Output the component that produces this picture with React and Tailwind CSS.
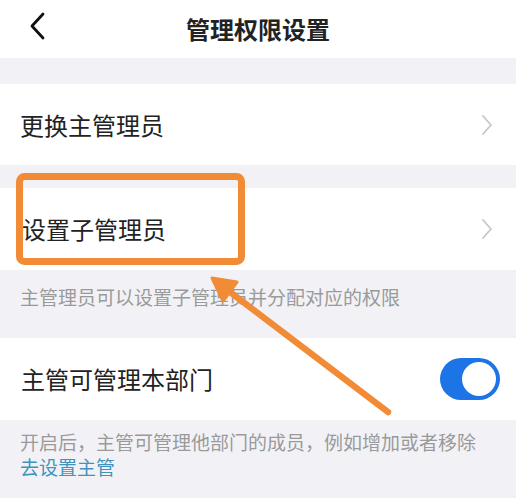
import React from "react";

const font = { fontFamily: '"Noto Sans CJK SC", "Noto Sans", sans-serif' };

function Chevron() {
  return (
    <svg width="14" height="24" viewBox="0 0 14 24" fill="none">
      <path d="M3 3l8 9-8 9" stroke="#c6c6c6" strokeWidth="1.8" strokeLinecap="round" strokeLinejoin="round" />
    </svg>
  );
}

export default function App() {
  return (
    <div className="relative w-[516px] h-[498px] overflow-hidden bg-[#f2f2f6]" style={font}>
      <div className="h-[58px] bg-white relative flex items-center justify-center">
        <svg className="absolute left-[28px] top-[12px]" width="20" height="28" viewBox="0 0 20 28" fill="none">
          <path d="M15 2L4 14l11 12" stroke="#111" strokeWidth="2.8" strokeLinecap="round" strokeLinejoin="round" />
        </svg>
        <span className="text-[24px] font-semibold text-[#222] leading-none">管理权限设置</span>
      </div>
      <div className="h-[26px]" />
      <div className="h-[81px] bg-white flex items-center justify-between pl-[20px] pr-[22px]">
        <span className="text-[24px] text-[#222] leading-none">更换主管理员</span>
        <Chevron />
      </div>
      <div className="h-[23px]" />
      <div className="h-[82px] bg-white flex items-center justify-between pl-[22px] pr-[22px]">
        <span className="text-[24px] text-[#222] leading-none">设置子管理员</span>
        <Chevron />
      </div>
      <div className="h-[68px] pl-[20px] pt-[15px]">
        <span className="text-[19px] text-[#9a9a9a] leading-[24px]">主管理员可以设置子管理员并分配对应的权限</span>
      </div>
      <div className="h-[82px] bg-white flex items-center justify-between pl-[21px] pr-[16px]">
        <span className="text-[24px] text-[#222] leading-none">主管可管理本部门</span>
        <div className="w-[60px] h-[42px] rounded-full bg-[#1c74e6] flex items-center justify-end pr-[4px]">
          <div className="w-[34px] h-[34px] rounded-full bg-white" />
        </div>
      </div>
      <div className="pl-[20px] pt-[9px] text-[19px] leading-[25px]">
        <div className="text-[#9a9a9a]">开启后，主管可管理他部门的成员，例如增加或者移除</div>
        <div className="text-[#3f93bd]">去设置主管</div>
      </div>
      <svg className="absolute left-0 top-0 pointer-events-none" width="516" height="498" viewBox="0 0 516 498" fill="none">
        <rect x="19.5" y="176.5" width="222" height="85" rx="5" stroke="#f28b36" strokeWidth="7" />
        <line x1="388" y1="412" x2="226" y2="289" stroke="#f28b36" strokeWidth="6.5" strokeLinecap="round" />
        <polygon points="212,278 237,282 223,301" fill="#f28b36" stroke="#f28b36" strokeWidth="3" strokeLinejoin="round" />
      </svg>
    </div>
  );
}
